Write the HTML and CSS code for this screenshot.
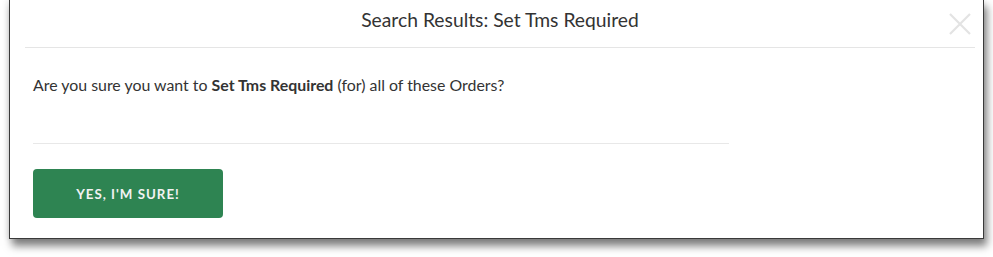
FILE: index.html
```html
<!DOCTYPE html>
<html>
<head lang="en">
    <meta charset="UTF-8">
    <title>Search Results: Set Tms Required</title>
    <link rel="stylesheet" href="styles.css">
</head>
<body>
<div class="modal">
    <div class="modal-header">
        <h4 class="modal-title">Search Results: Set Tms Required</h4>
        <span class="close" title="Close">
            <svg width="22" height="22" viewBox="0 0 22 22">
                <path d="M1 1 L21 21 M21 1 L1 21" stroke="#e3e3e3" stroke-width="2.2" fill="none"/>
            </svg>
        </span>
    </div>
    <div class="modal-body">
        <p>Are you sure you want to <b>Set Tms Required</b> (for) all of these Orders?</p>
        <hr>
        <button class="btn-sure">Yes, I'm sure!</button>
    </div>
</div>
</body>
</html>
```

FILE: styles.css
```css
* {
    margin: 0;
    padding: 0;
    box-sizing: border-box;
}

html, body {
    min-height: 257px;
}

body {
    padding-bottom: 20px;
    font-family: Lato, "Open Sans", sans-serif;
    color: #333;
    background: #fff;
}

.modal {
    margin: -1px 9px 0 9px;
    width: 975px;
    border: 1px solid #3a3a3a;
    background: #fff;
    box-shadow: 3px 7px 8px rgba(0, 0, 0, 0.5), -2px 0 6px rgba(0, 0, 0, 0.08);
}

.modal-header {
    position: relative;
    margin: 0 8px 0 15px;
    padding: 7px 0 14px;
    border-bottom: 1px solid #e5e5e5;
    text-align: center;
}

.modal-title {
    font-size: 19.3px;
    font-weight: normal;
    line-height: 26px;
}

.close {
    position: absolute;
    right: 4px;
    top: 13px;
    line-height: 0;
    cursor: pointer;
}

.modal-body {
    padding: 0 23px 20px;
}

.modal-body p {
    margin-top: 27px;
    font-size: 15.9px;
    line-height: 20px;
}

.modal-body hr {
    margin: 48px 0 25px;
    width: 696px;
    border: 0;
    border-top: 1px solid #e8e8e8;
}

.btn-sure {
    display: block;
    width: 190px;
    height: 49px;
    border: 0;
    border-radius: 4px;
    background: #2e8452;
    color: #f2f2f2;
    font-family: Lato, sans-serif;
    font-size: 13.3px;
    font-weight: bold;
    letter-spacing: 1px;
    text-transform: uppercase;
    cursor: pointer;
}
```
